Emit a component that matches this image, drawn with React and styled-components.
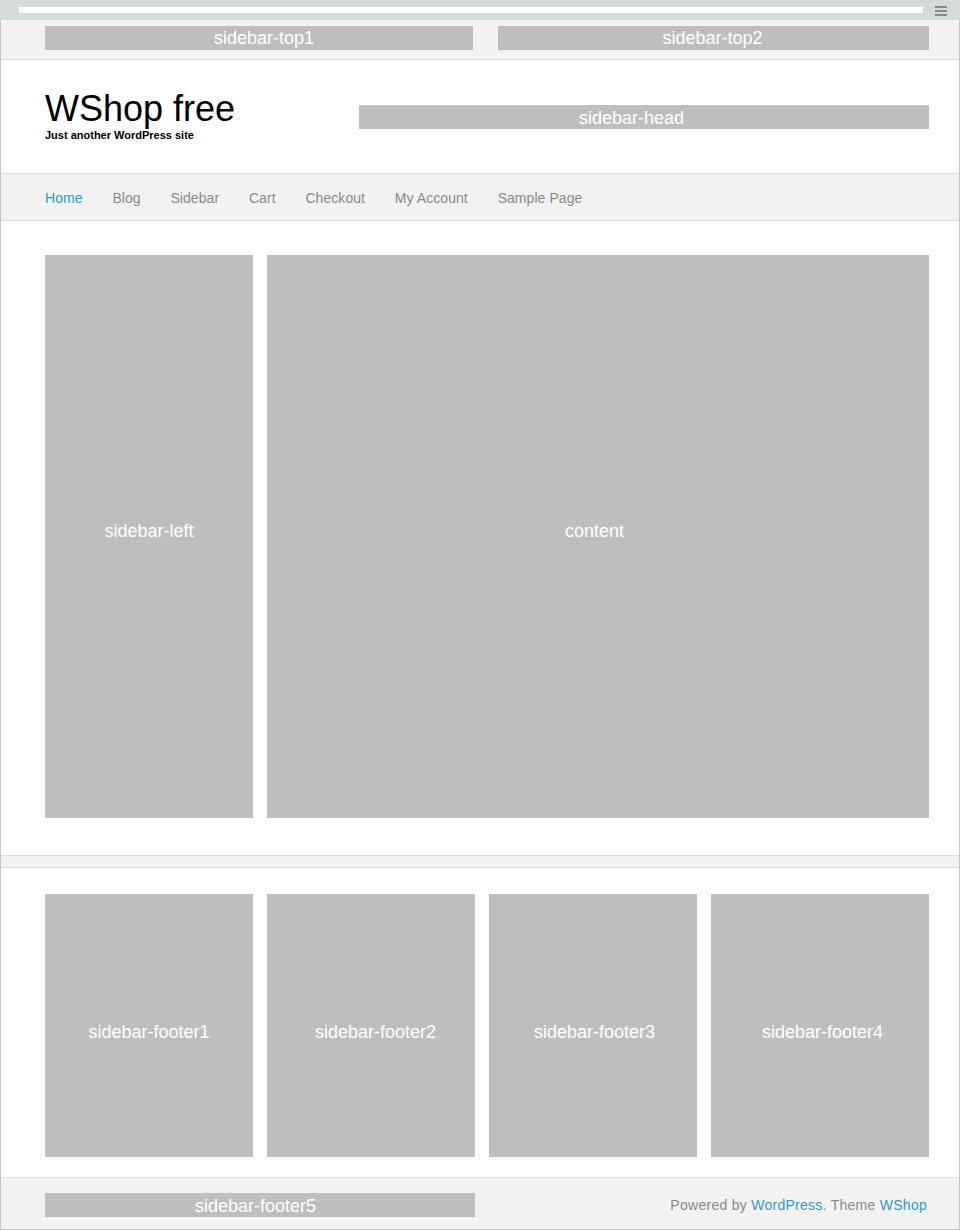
import React from "react";
import styled, { createGlobalStyle } from "styled-components";

const Global = createGlobalStyle`
  html, body { margin: 0; padding: 0; background: #ffffff; }
  body { font-family: Arial, "Liberation Sans", Helvetica, sans-serif; }
  * { box-sizing: border-box; }
`;

const Page = styled.div`
  width: 960px;
`;

const TopBar = styled.div`
  height: 20px;
  background: #d5dbdb;
  display: flex;
  align-items: flex-start;
  gap: 12px;
  padding: 7px 13px 0 19px;
`;

const Strip = styled.div`
  flex: 1;
  height: 6px;
  background: #ffffff;
`;

const Burger = styled.div`
  width: 12px;
  display: flex;
  flex-direction: column;
  gap: 2px;
  margin-top: -1px;
  span {
    display: block;
    height: 2px;
    background: #8a8a88;
  }
`;

const Frame = styled.div`
  border-left: 1px solid #c6c6c6;
  border-right: 1px solid #c6c6c6;
  border-bottom: 1px solid #c6c6c6;
`;

const Widget = styled.div`
  background: #bebebe;
  color: #ffffff;
  font-size: 18px;
  line-height: 1;
  display: flex;
  align-items: center;
  justify-content: center;
  height: ${(p) => p.$h}px;
  padding: ${({ $dx = 0, $dy = 0 }) =>
    `${$dy > 0 ? 2 * $dy : 0}px ${$dx < 0 ? -2 * $dx : 0}px ${$dy < 0 ? -2 * $dy : 0}px ${$dx > 0 ? 2 * $dx : 0}px`};
`;

const TopWidgets = styled.div`
  height: 40px;
  background: #f2f2f2;
  border-bottom: 1px solid #dcdcdc;
  padding: 6px 30px 0 44px;
  display: grid;
  grid-template-columns: 428px 1fr;
  gap: 25px;
  align-items: start;
`;

const Header = styled.header`
  height: 113px;
  padding: 0 30px 0 44px;
  display: flex;
  justify-content: space-between;
  align-items: flex-start;
`;

const Brand = styled.div`
  padding-top: 31px;
`;

const Title = styled.h1`
  margin: 0;
  font-size: 36px;
  line-height: 36px;
  font-weight: normal;
  color: #000000;
`;

const Tagline = styled.p`
  margin: 2px 0 0;
  font-size: 11px;
  line-height: 13px;
  font-weight: bold;
  color: #000000;
`;

const HeadSlot = styled.div`
  width: 570px;
  margin-top: 45px;
`;

const Nav = styled.nav`
  height: 48px;
  background: #f2f2f2;
  border-top: 1px solid #dcdcdc;
  border-bottom: 1px solid #dcdcdc;
  padding: 2px 0 0 44px;
  display: flex;
  gap: 29.8px;
`;

const NavLink = styled.a`
  font-size: 14px;
  line-height: 44px;
  letter-spacing: 0.06px;
  color: ${(p) => (p.$active ? "#3497c8" : "#8a8a8a")};
  text-decoration: none;
`;

const Main = styled.main`
  padding: 34px 30px 37px 44px;
  display: grid;
  grid-template-columns: 208px 1fr;
  gap: 14px;
`;

const Divider = styled.div`
  height: 13px;
  background: #f2f2f2;
  border-top: 1px solid #dcdcdc;
  border-bottom: 1px solid #dcdcdc;
`;

const FooterWidgets = styled.section`
  padding: 26px 30px 20px 44px;
  display: grid;
  grid-template-columns: 208px 208px 208px 1fr;
  gap: 14px;
`;

const BottomBar = styled.footer`
  height: 52px;
  background: #f2f2f2;
  border-top: 1px solid #dcdcdc;
  padding: 15px 32px 0 44px;
  display: flex;
  justify-content: space-between;
  align-items: flex-start;
`;

const FooterSlot = styled.div`
  width: 430px;
`;

const Credits = styled.p`
  margin: 0;
  font-size: 14px;
  line-height: 24px;
  letter-spacing: 0.27px;
  color: #8a8a8a;
  a {
    color: #3497c8;
    text-decoration: none;
  }
`;

const navItems = ["Home", "Blog", "Sidebar", "Cart", "Checkout", "My Account", "Sample Page"];

export default function App() {
  return (
    <Page>
      <Global />
      <TopBar>
        <Strip />
        <Burger>
          <span />
          <span />
          <span />
        </Burger>
      </TopBar>
      <Frame>
        <TopWidgets>
          <Widget $h={24} $dx={5}>sidebar-top1</Widget>
          <Widget $h={24} $dx={-1}>sidebar-top2</Widget>
        </TopWidgets>
        <Header>
          <Brand>
            <Title>WShop free</Title>
            <Tagline>Just another WordPress site</Tagline>
          </Brand>
          <HeadSlot>
            <Widget $h={24} $dx={-12.5} $dy={1}>sidebar-head</Widget>
          </HeadSlot>
        </Header>
        <Nav>
          {navItems.map((item, i) => (
            <NavLink key={item} href="#" $active={i === 0}>
              {item}
            </NavLink>
          ))}
        </Nav>
        <Main>
          <Widget $h={563} $dy={-6}>sidebar-left</Widget>
          <Widget $h={563} $dx={-3.5} $dy={-6}>content</Widget>
        </Main>
        <Divider />
        <FooterWidgets>
          <Widget $h={263} $dy={6}>sidebar-footer1</Widget>
          <Widget $h={263} $dx={4.5} $dy={6}>sidebar-footer2</Widget>
          <Widget $h={263} $dx={1.5} $dy={6}>sidebar-footer3</Widget>
          <Widget $h={263} $dx={2.5} $dy={6}>sidebar-footer4</Widget>
        </FooterWidgets>
        <BottomBar>
          <FooterSlot>
            <Widget $h={24} $dx={-4.5} $dy={0.5}>sidebar-footer5</Widget>
          </FooterSlot>
          <Credits>
            Powered by <a href="#">WordPress</a>. Theme <a href="#">WShop</a>
          </Credits>
        </BottomBar>
      </Frame>
    </Page>
  );
}
